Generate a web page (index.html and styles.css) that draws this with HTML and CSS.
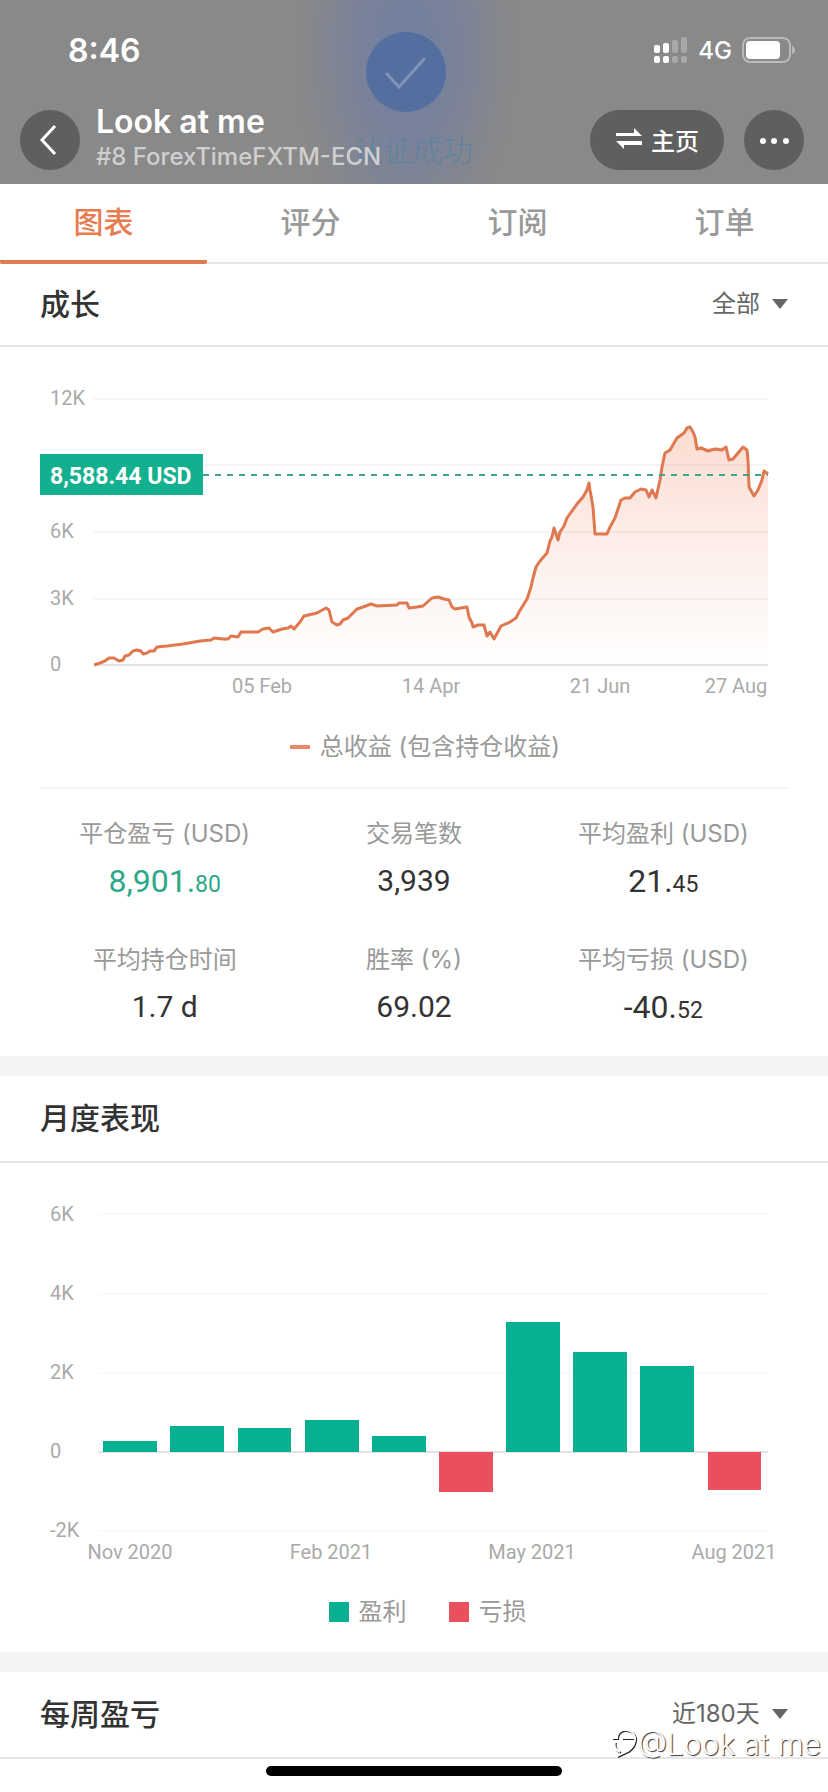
FILE: index.html
```html
<!DOCTYPE html>
<html lang="zh-CN">
<head>
<meta charset="utf-8">
<meta name="viewport" content="width=device-width, initial-scale=1">
<title>Look at me</title>
<link rel="stylesheet" href="styles.css">
</head>
<body>
<header class="header">
  <div class="verified" aria-hidden="true">
    <svg class="verified-mark" viewBox="0 0 80 80"><circle cx="40" cy="40" r="40" fill="#546e9f"/><path d="M20 41l13 14 26-29" fill="none" stroke="#7f93b5" stroke-width="3"/></svg>
    <span class="verified-text">认证成功</span>
  </div>
  <div class="status">
    <span class="clock">8:46</span>
    <div class="status-icons">
      <svg class="signal" viewBox="0 0 34 26">
        <g fill="#fff"><rect x="0" y="8" width="6" height="8" rx="2"/><rect x="9" y="6" width="6" height="10" rx="2"/><rect x="0" y="19" width="6" height="7" rx="2"/><rect x="9" y="19" width="6" height="7" rx="2"/></g>
        <g fill="#a8a8a8"><rect x="18" y="3" width="6" height="13" rx="2"/><rect x="27" y="0" width="6" height="16" rx="2"/><rect x="18" y="19" width="6" height="7" rx="2"/><rect x="27" y="19" width="6" height="7" rx="2"/></g>
      </svg>
      <span class="network">4G</span>
      <svg class="battery" viewBox="0 0 54 26">
        <rect x="1" y="1" width="47" height="24" rx="7" fill="none" stroke="#b9b9b9" stroke-width="2"/>
        <rect x="4" y="4" width="34" height="18" rx="4" fill="#fff"/>
        <path d="M50 9q3 1 3 4t-3 4z" fill="#b9b9b9"/>
      </svg>
    </div>
  </div>
  <div class="nav">
    <button class="round" type="button" aria-label="返回">
      <svg class="glyph" viewBox="0 0 60 60"><path d="M35 16L22 30l13 14" fill="none" stroke="#fff" stroke-width="3"/></svg>
    </button>
    <div class="account">
      <h1 class="name">Look at me</h1>
      <p class="broker">#8 ForexTimeFXTM-ECN</p>
    </div>
    <button class="pill" type="button">
      <svg class="swap" viewBox="0 0 28 24"><path d="M1 9V6h18V1l8 8zM27 14v4H9v4l-8-8z" fill="#fff"/></svg>
      <span>主页</span>
    </button>
    <button class="round" type="button" aria-label="更多">
      <svg class="glyph" viewBox="0 0 60 60" fill="#fff"><circle cx="19" cy="31" r="3"/><circle cx="30" cy="31" r="3"/><circle cx="42" cy="31" r="3"/></svg>
    </button>
  </div>
</header>

<nav class="tabs">
  <a class="tab active" href="#chart">图表</a>
  <a class="tab" href="#rating">评分</a>
  <a class="tab" href="#subscribe">订阅</a>
  <a class="tab" href="#orders">订单</a>
</nav>

<main>
<section id="chart">
  <div class="section-head">
    <h2 class="title">成长</h2>
    <label class="picker">
      <select class="select" aria-label="时间范围"><option>全部</option></select>
      <svg class="caret" viewBox="0 0 16 10"><path d="M0 0h16L8 10z" fill="#666"/></svg>
    </label>
  </div>
  <svg class="chart" viewBox="0 347 828 361" role="img" aria-label="总收益">
    <defs>
      <linearGradient id="fade" x1="0" y1="427" x2="0" y2="665" gradientUnits="userSpaceOnUse">
        <stop offset="0" stop-color="#fbdcd1"/><stop offset="0.4" stop-color="#fdebe5"/><stop offset="0.8" stop-color="#fdf8f6"/><stop offset="1" stop-color="#fff"/>
      </linearGradient>
    </defs>
    <path fill="url(#fade)" d="M94 665L109 658 119 661 129 655 137 650 143 654 157 647 200 641 214 638 228 639 241 632 258 632 269 628 273 632 291 626 294 629 304 616 317 613 326 608 332 622 337 625 357 609 371 604 399 603 407 603 409 608 423 606 438 597 449 600 455 609 467 607 473 627 484 625 487 636 490 632 494 639 501 626 516 618 527 599 536 567 547 553 554 528 558 540 567 518 583 497 589 483 593 507 595 534 607 534 615 518 621 500 630 498 641 489 646 490 649 497 652 490 656 498 660 480 665 453 677 438 690 427 695 437 697 449 726 447 729 460 733 459 743 447 747 450 749 487 754 496 758 490 764 471 768 474V665z"/>
    <path class="grid" d="M94 399H768M94 465H768M94 532H768M94 599H768"/>
    <path class="base" d="M94 665H768"/>
    <path class="line" d="M94 665L100 663 105 661 109 658 114 658 119 661 123 660 125 656 129 655 133 651 137 650 141 651 143 654 147 653 150 651 154 651 157 647 167 646 183 644 200 641 211 640 214 638 223 639 228 639 231 636 238 637 241 632 258 632 263 629 269 628 273 632 282 629 288 628 291 626 294 629 300 622 304 616 317 613 326 608 329 610 332 622 337 625 340 624 343 620 348 618 357 609 363 607 371 604 377 606 397 605 399 603 407 603 409 608 417 607 423 606 432 598 438 597 444 599 449 600 452 607 455 609 467 607 469 617 472 623 473 627 478 625 484 625 487 636 490 632 494 639 501 626 510 622 516 618 519 612 527 599 531 587 533 578 536 567 540 561 547 553 550 541 552 537 554 528 558 540 560 532 564 526 567 518 577 504 583 497 587 490 589 483 590 490 593 507 595 534 607 534 610 527 615 518 621 500 625 498 630 498 635 492 641 489 646 490 649 497 652 490 656 498 660 480 662 467 665 453 670 450 677 438 684 433 687 428 690 427 693 432 695 437 697 449 701 448 708 451 715 449 722 450 726 447 729 460 733 459 743 447 747 450 748 460 749 487 754 496 758 490 762 480 764 471 768 474"/>
    <path class="current" d="M203 475H768"/>
    <rect x="40" y="454" width="163" height="41" fill="#12b08e"/>
    <text class="badge" x="50" y="484">8,588.44 USD</text>
    <g class="axis">
      <text x="50" y="405">12K</text><text x="50" y="538">6K</text><text x="50" y="605">3K</text><text x="50" y="671">0</text>
      <g text-anchor="middle"><text x="262" y="693">05 Feb</text><text x="431" y="693">14 Apr</text><text x="600" y="693">21 Jun</text><text x="736" y="693">27 Aug</text></g>
    </g>
  </svg>
  <div class="legend growth-legend"><span class="key"><i class="dash"></i>总收益 (包含持仓收益)</span></div>
  <dl class="stats">
    <div class="stat"><dt>平仓盈亏 (USD)</dt><dd class="big gain">8,901.<small>80</small></dd></div>
    <div class="stat"><dt>交易笔数</dt><dd>3,939</dd></div>
    <div class="stat"><dt>平均盈利 (USD)</dt><dd class="big">21.<small>45</small></dd></div>
    <div class="stat"><dt>平均持仓时间</dt><dd>1.7 d</dd></div>
    <div class="stat"><dt>胜率 (%)</dt><dd>69.02</dd></div>
    <div class="stat"><dt>平均亏损 (USD)</dt><dd class="big">-40.<small>52</small></dd></div>
  </dl>
</section>

<section class="block">
  <div class="section-head tall"><h2 class="title">月度表现</h2></div>
  <svg class="chart" viewBox="0 1161 828 415" role="img" aria-label="月度表现">
    <path class="grid faint" d="M98 1212H768M98 1292H768M98 1371H768M98 1529H768"/>
    <path class="base" d="M98 1450H768"/>
    <g fill="#08b092">
      <rect x="103" y="1439" width="54" height="11"/><rect x="170" y="1424" width="54" height="26"/><rect x="238" y="1426" width="53" height="24"/><rect x="305" y="1418" width="54" height="32"/><rect x="372" y="1434" width="54" height="16"/><rect x="506" y="1320" width="54" height="130"/><rect x="573" y="1350" width="54" height="100"/><rect x="640" y="1364" width="54" height="86"/>
    </g>
    <g fill="#e94f5d"><rect x="439" y="1450" width="54" height="40"/><rect x="708" y="1450" width="53" height="38"/></g>
    <g class="axis">
      <text x="50" y="1219">6K</text><text x="50" y="1298">4K</text><text x="50" y="1377">2K</text><text x="50" y="1456">0</text><text x="50" y="1535">-2K</text>
      <g text-anchor="middle"><text x="130" y="1557">Nov 2020</text><text x="331" y="1557">Feb 2021</text><text x="532" y="1557">May 2021</text><text x="734" y="1557">Aug 2021</text></g>
    </g>
  </svg>
  <div class="legend month-legend">
    <span class="key"><i class="square profit"></i>盈利</span>
    <span class="key"><i class="square loss"></i>亏损</span>
  </div>
</section>

<section class="block">
  <div class="section-head tall">
    <h2 class="title">每周盈亏</h2>
    <label class="picker">
      <select class="select" aria-label="时间范围"><option>近180天</option></select>
      <svg class="caret" viewBox="0 0 16 10"><path d="M0 0h16L8 10z" fill="#666"/></svg>
    </label>
  </div>
</section>
</main>

<div class="watermark">
  <svg class="mark" viewBox="0 0 26 32" fill="none"><g stroke="#222" stroke-width="2"><path d="M6 29L17 24Q25 18 24 10Q22 2 12 3Q6 5 6 11H1M11 11H24M4 15Q2 22 9 25"/></g><path stroke="#fff" stroke-width="2" d="M5 28L16 23Q24 17 23 9Q21 1 11 2Q5 4 5 10H0M10 10H23M3 14Q1 21 8 24"/></svg>
  <span>@Look at me</span>
</div>
<div class="home-bar"></div>
</body>
</html>
```
FILE: styles.css
```css
* { box-sizing: border-box; }
body {
  margin: 0;
  min-height: 100vh;
  position: relative;
  background: #fff;
  color: #333;
  font-family: Inter, "Noto Sans CJK SC", sans-serif;
}
h1, h2, p, dl, dd { margin: 0; }
button { border: 0; padding: 0; font: inherit; color: #fff; background: #5f5f5f; }
svg { display: block; }

.header {
  position: relative;
  height: 184px;
  background: radial-gradient(ellipse 110px 210px at 49% 50px, #707f9f 0%, #7a829a 45%, #838690 75%, #898989 100%) #898989;
  color: #fff;
}
.verified {
  position: absolute;
  top: 32px;
  left: 49%;
  width: 140px;
  margin-left: -70px;
  display: flex;
  flex-direction: column;
  align-items: center;
  gap: 16px;
}
.verified-mark { width: 80px; height: 80px; }
.verified-text {
  padding-left: 14px;
  font-size: 30px;
  line-height: 44px;
  white-space: nowrap;
  color: #5f849e;
  font-weight: 300;
}
.status {
  position: relative;
  display: flex;
  justify-content: space-between;
  align-items: center;
  height: 100px;
  padding: 0 32px 0 68px;
}
.clock { font-size: 32px; font-weight: 600; }
.status-icons { display: flex; align-items: center; gap: 10px; }
.signal { width: 34px; height: 26px; }
.network { font-size: 24px; font-weight: 500; }
.battery { width: 54px; height: 26px; }
.nav {
  position: relative;
  display: flex;
  align-items: center;
  height: 80px;
  padding: 0 24px 0 20px;
}
.round { flex: none; width: 60px; height: 60px; border-radius: 50%; }
.glyph { width: 60px; height: 60px; }
.account { flex: 1; min-width: 0; padding: 0 0 6px 16px; }
.name { font-size: 32px; line-height: 40px; font-weight: 600; }
.broker { font-size: 24px; line-height: 30px; font-weight: 500; color: #cfcfcf; white-space: nowrap; }
.pill {
  display: flex;
  align-items: center;
  justify-content: center;
  gap: 8px;
  width: 134px;
  height: 60px;
  margin-right: 20px;
  padding-bottom: 2px;
  border-radius: 30px;
  font-size: 24px;
  font-weight: 500;
}
.swap { width: 28px; height: 24px; }

.tabs { display: flex; height: 80px; border-bottom: 2px solid #e6e6e6; }
.tab {
  flex: 1;
  height: 80px;
  border-bottom: 4px solid transparent;
  border-radius: 2px;
  color: #999;
  font-size: 30px;
  font-weight: 500;
  line-height: 76px;
  text-align: center;
  text-decoration: none;
}
.tab.active { color: #e67c50; border-color: #e07a50; }

.section-head {
  display: flex;
  align-items: center;
  justify-content: space-between;
  height: 83px;
  padding: 0 40px 2px;
  border-bottom: 2px solid #e6e6e6;
}
.section-head.tall { height: 87px; }
.title { font-size: 30px; font-weight: 500; line-height: 44px; }
.picker { display: flex; align-items: center; gap: 12px; }
.select {
  appearance: none;
  border: 0;
  padding: 0;
  background: none;
  color: #666;
  font: inherit;
  font-size: 24px;
  line-height: 36px;
}
.caret { width: 16px; height: 10px; }
.block { border-top: 20px solid #f4f4f4; }

.chart { width: 100%; height: auto; font-family: Roboto, sans-serif; }
.grid { stroke: #000; stroke-opacity: .04; stroke-width: 2; }
.grid.faint { stroke-opacity: .02; }
.base { stroke: #e3e3e6; stroke-width: 2; }
.line { fill: none; stroke: #e0784f; stroke-width: 3; stroke-linejoin: round; }
.current { stroke: #3da68c; stroke-width: 2; stroke-dasharray: 6 6; }
.badge { fill: #fff; font-size: 23px; font-weight: 700; }
.axis { fill: #aaa; font-size: 20px; }

.legend { display: flex; justify-content: center; color: #999; font-size: 24px; line-height: 36px; }
.key { display: flex; align-items: center; gap: 10px; }
.growth-legend { margin: 0 40px; padding: 21px 0 22px 22px; border-bottom: 2px solid #f6f6f6; }
.month-legend { gap: 42px; padding: 16px 0 22px 27px; }
.dash { width: 20px; height: 4px; background: #e98a66; }
.square { width: 20px; height: 20px; }
.profit { background: #08b092; }
.loss { background: #e94f5d; }

.stats {
  display: grid;
  grid-template-columns: repeat(3, 1fr);
  row-gap: 32px;
  padding: 25px 40px 22px;
  text-align: center;
}
.stat dt { color: #999; font-size: 24px; line-height: 40px; }
.stat dd { font-family: Roboto, sans-serif; font-size: 30px; line-height: 54px; }
.stat .big { font-size: 32px; }
.stat small { font-size: 23px; line-height: 1; }
.stat .gain { color: #2ba987; }

.watermark {
  position: absolute;
  right: 7px;
  bottom: 28px;
  display: flex;
  align-items: center;
  color: #fff;
  font-size: 30px;
  line-height: 40px;
  font-weight: 300;
  text-shadow: 1px 1px 1px #333;
}
.mark { width: 26px; height: 32px; }
.home-bar {
  position: absolute;
  bottom: 16px;
  left: 50%;
  width: 296px;
  height: 10px;
  margin-left: -148px;
  border-radius: 5px;
  background: #000;
}
```
